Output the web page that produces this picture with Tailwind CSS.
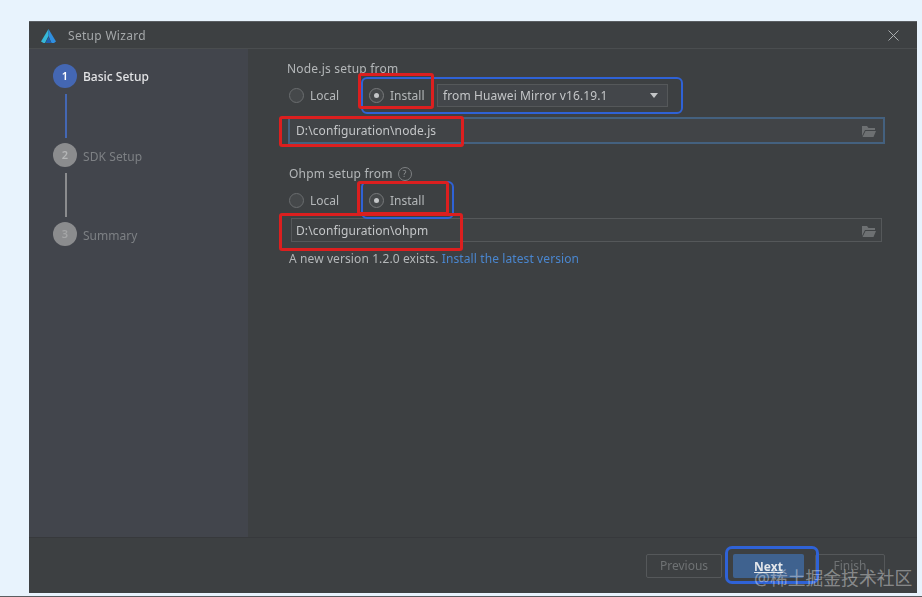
<!DOCTYPE html>
<html lang="en">
<head>
    <meta charset="UTF-8">
    <meta name="viewport" content="width=device-width, initial-scale=1.0">
    <script src="https://cdn.jsdelivr.net/npm/@tailwindcss/browser@4"></script>
    <title>Setup Wizard</title>
</head>
<body class="bg-[#e8f3fd] font-['Noto_Sans','Noto_Sans_CJK_SC',sans-serif] overflow-hidden">
    <div class="relative w-[922px] h-[597px] pt-[21px] pl-[29px] overflow-hidden">
        <!-- wizard window -->
        <div class="w-[888px] h-[572px] flex flex-col bg-[#3d4042] text-[12px] text-[#b4b7b9] blur-[0.5px] border-t border-[#5a5e62]">
            <!-- title bar -->
            <header class="h-[27px] shrink-0 flex items-center pl-[11px] pr-[18px] pt-[1px] border-b border-[#4a4d4f]">
                <svg class="w-[17px] h-[16px]" viewBox="0 0 17 16">
                    <path d="M8.5 1 L1 13.5 L3.5 15 L5 15 L8.5 8 Z" fill="#35b8d8"></path>
                    <path d="M8.5 1 L16 13.5 L14 15 L11.5 15 L8.5 8 Z" fill="#2f8fe0"></path>
                    <path d="M8.5 9 L11.5 15 L5.5 15 Z" fill="#1f5fb0"></path>
                </svg>
                <span class="ml-[11px] tracking-[0.3px] text-[#a5a8aa]">Setup Wizard</span>
                <svg class="ml-auto w-[11px] h-[11px]" viewBox="0 0 11 11" fill="none" stroke="#a9acae" stroke-width="1">
                    <path d="M0.5 0.5 L10.5 10.5 M10.5 0.5 L0.5 10.5"></path>
                </svg>
            </header>

            <div class="flex-1 flex min-h-0 border-b border-[#37393c]">
                <!-- steps -->
                <aside class="w-[219px] shrink-0 bg-[#42454c] pl-[24px] pt-[15px]">
                    <div class="flex items-center gap-[6px] h-[24px]">
                        <span class="w-[24px] h-[24px] rounded-full bg-[#4467b3] text-white text-[11px] font-semibold flex items-center justify-center">1</span>
                        <span class="pt-[2px] text-[#e3e4e6] font-medium">Basic Setup</span>
                    </div>
                    <div class="w-[2px] h-[44px] mt-[6px] mb-[5px] ml-[12px] bg-[#4467b3]"></div>
                    <div class="flex items-center gap-[6px] h-[24px]">
                        <span class="w-[24px] h-[24px] rounded-full bg-[#8b8c8e] text-[#b5b6b7] text-[11px] font-semibold flex items-center justify-center">2</span>
                        <span class="pt-[3px] text-[#7d8084] tracking-[0.1px]">SDK Setup</span>
                    </div>
                    <div class="w-[2px] h-[44px] mt-[6px] mb-[5px] ml-[12px] bg-[#8b8c8e]"></div>
                    <div class="flex items-center gap-[6px] h-[24px]">
                        <span class="w-[24px] h-[24px] rounded-full bg-[#8b8c8e] text-[#a5a6a7] text-[11px] font-semibold flex items-center justify-center">3</span>
                        <span class="pt-[3px] text-[#7d8084]">Summary</span>
                    </div>
                </aside>

                <!-- form -->
                <main class="flex-1 pl-[39px] pr-[32px] pt-[11px]">
                    <p class="h-[18px] leading-[18px] tracking-[0.2px]">Node.js setup from</p>
                    <div class="mt-[6px] flex items-center h-[23px] pl-[2px]">
                        <span class="w-[15px] h-[15px] rounded-full border border-[#6a6d6f] bg-[#45484a]"></span>
                        <span class="ml-[6px] w-[59px] pt-[1px]">Local</span>
                        <span class="w-[15px] h-[15px] rounded-full border border-[#77797b] bg-[#45484a] flex items-center justify-center"><span class="w-[5px] h-[5px] rounded-full bg-[#c4c6c8]"></span></span>
                        <span class="ml-[6px] w-[47px] pt-[1px]">Install</span>
                        <div class="w-[231px] h-[23px] flex items-center justify-between pl-[5px] pr-[9px] border border-[#55585a] bg-[#43464a] text-[#c4c6c8] tracking-[0.1px]">
                            <span class="pt-[1px]">from Huawei Mirror v16.19.1</span>
                            <span class="w-0 h-0 border-x-[4px] border-x-transparent border-t-[5px] border-t-[#c4c6c8]"></span>
                        </div>
                    </div>
                    <div class="mt-[10px] ml-[1px] h-[27px] w-[597px] flex items-center justify-between pl-[6px] pr-[7px] border-2 border-[#44617f] bg-[#414447] text-[#c4c6c8] tracking-[0.1px]">
                        <span>D:\configuration\node.js</span>
                        <svg class="w-[14px] h-[12px]" viewBox="0 0 14 12"><path d="M0 1 H5 L6.5 3 H13 V5 H3 L0 11 Z M3.5 6 H14 L11.5 12 H0.5 Z" fill="#6d7072"></path></svg>
                    </div>

                    <p class="mt-[21px] ml-[2px] h-[18px] leading-[18px] tracking-[0.2px] flex items-center gap-[5px]">
                        Ohpm setup from
                        <span class="w-[14px] h-[14px] rounded-full border border-[#7d8082] text-[9px] text-[#8d9092] flex items-center justify-center">?</span>
                    </p>
                    <div class="mt-[6px] flex items-center h-[23px] pl-[2px]">
                        <span class="w-[15px] h-[15px] rounded-full border border-[#6a6d6f] bg-[#45484a]"></span>
                        <span class="ml-[6px] w-[59px] pt-[1px]">Local</span>
                        <span class="w-[15px] h-[15px] rounded-full border border-[#77797b] bg-[#45484a] flex items-center justify-center"><span class="w-[5px] h-[5px] rounded-full bg-[#c4c6c8]"></span></span>
                        <span class="ml-[6px] pt-[1px]">Install</span>
                    </div>
                    <div class="mt-[6px] ml-[4px] h-[24px] w-[591px] flex items-center justify-between pl-[4px] pr-[5px] pt-[1px] border border-[#55585a] bg-[#3f4244] text-[#c4c6c8] tracking-[0.1px]">
                        <span>D:\configuration\ohpm</span>
                        <svg class="w-[14px] h-[12px]" viewBox="0 0 14 12"><path d="M0 1 H5 L6.5 3 H13 V5 H3 L0 11 Z M3.5 6 H14 L11.5 12 H0.5 Z" fill="#6d7072"></path></svg>
                    </div>
                    <p class="mt-[8px] ml-[2px] h-[18px] leading-[18px] tracking-[0.1px]">A new version 1.2.0 exists. <span class="text-[#4a86cf]">Install the latest version</span></p>
                </main>
            </div>

            <!-- footer buttons -->
            <footer class="h-[55px] shrink-0 flex items-start justify-end gap-[11px] pt-[16px] pr-[32px]">
                <button class="w-[76px] h-[24px] rounded-[2px] border border-[#55585a] text-[#6f7274]">Previous</button>
                <button class="w-[71px] h-[24px] pt-[1px] rounded-[2px] bg-[#3f628f] text-[#e3e6ea] font-bold underline">Next</button>
                <button class="w-[70px] h-[24px] rounded-[2px] border border-[#55585a] text-[#6f7274]">Finish</button>
            </footer>
        </div>

        <!-- blue annotations -->
        <div class="absolute left-[361px] top-[77px] w-[322px] h-[37px] rounded-[6px] border-2 border-[#2f62d6]"></div>
        <div class="absolute left-[361px] top-[181px] w-[93px] h-[38px] rounded-[6px] border-2 border-[#2f62d6]"></div>
        <div class="absolute left-[725px] top-[546px] w-[94px] h-[38px] rounded-[7px] border-[3px] border-[#2f62d6]"></div>
        <!-- red annotations -->
        <div class="absolute left-[358px] top-[73px] w-[76px] h-[36px] rounded-[3px] border-[3px] border-[#dc1f1f]"></div>
        <div class="absolute left-[279px] top-[116px] w-[185px] h-[31px] rounded-[3px] border-[3px] border-[#dc1f1f]"></div>
        <div class="absolute left-[357px] top-[181px] w-[92px] h-[34px] rounded-[3px] border-[3px] border-[#dc1f1f]"></div>
        <div class="absolute left-[279px] top-[213px] w-[184px] h-[38px] rounded-[3px] border-[3px] border-[#dc1f1f]"></div>

        <!-- watermark -->
        <span class="absolute left-[754px] top-[566px] text-[17.8px] leading-[24px] whitespace-nowrap text-white/40">@稀土掘金技术社区</span>
        <div class="absolute left-0 right-0 bottom-0 h-[1px] bg-[#5a5d60]"></div>
    </div>
</body>
</html>
